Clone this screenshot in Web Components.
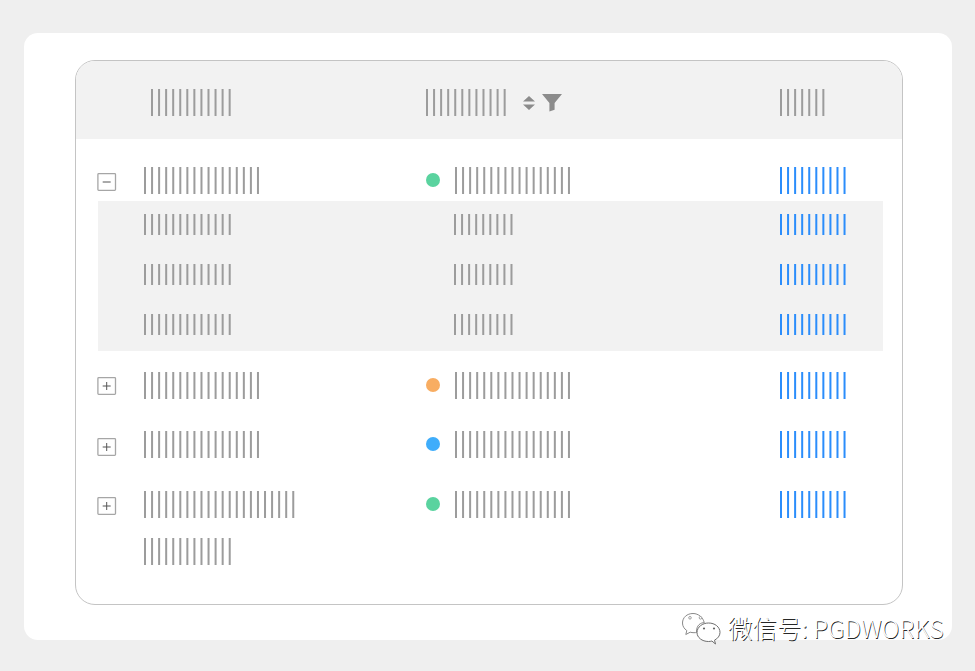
<!DOCTYPE html>
<html lang="zh">
<head>
<meta charset="utf-8">
<title>Table</title>
<style>
  html, body { margin: 0; background: #efefef; }
  body { min-height: 671px; overflow: hidden; font-family: "Liberation Sans", "Noto Sans CJK SC", sans-serif; }
</style>
</head>
<body>
<page-card>
  <tree-table>
    <table-head slot="head"></table-head>

    <table-row count="17" status="green" status-count="17" link-count="10" top="0" toggle="minus" toggle-top="6"></table-row>
    <sub-panel>
      <sub-row></sub-row>
      <sub-row></sub-row>
      <sub-row></sub-row>
    </sub-panel>
    <table-row count="17" status="orange" status-count="17" link-count="10" top="21" toggle="plus" toggle-top="5"></table-row>
    <table-row count="17" status="blue" status-count="17" link-count="10" top="32" toggle="plus" toggle-top="7"></table-row>
    <table-row count="22" extra-count="13" status="green" status-count="17" link-count="10" top="33" toggle="plus" toggle-top="6"></table-row>
  </tree-table>
  <wechat-mark slot="mark">微信号: PGDWORKS</wechat-mark>
</page-card>

<script>
// every element below renders into an open shadow root
function define(name, html) {
  const tpl = document.createElement('template');
  tpl.innerHTML = html;
  customElements.define(name, class extends HTMLElement {
    constructor() {
      super();
      this.attachShadow({ mode: 'open' }).appendChild(tpl.content.cloneNode(true));
    }
  });
}

// placeholder "text": a run of thin vertical bars
class BarText extends HTMLElement {
  constructor() {
    super();
    const count = +this.getAttribute('count') || 10;
    const h = +this.getAttribute('h') || 27;
    const color = this.getAttribute('tone') === 'link' ? '#2b8dfb' : '#9c9c9c';
    const pitch = 7.06;
    const width = (count - 1) * pitch + 2;
    let rects = '';
    for (let i = 0; i < count; i++) {
      rects += `<rect x="${(i * pitch).toFixed(2)}" width="2" height="${h}"/>`;
    }
    this.attachShadow({ mode: 'open' }).innerHTML = `
      <style>
        :host { display: block; flex: none; width: ${width}px; height: ${h}px; }
        svg { display: block; overflow: visible; }
      </style>
      <svg width="${width}" height="${h}" fill="${color}">${rects}</svg>`;
  }
}
customElements.define('bar-text', BarText);

define('page-card', `
  <style>
    :host {
      display: block;
      position: relative;
      box-sizing: border-box;
      width: 928px;
      height: 607px;
      margin: 33px 0 0 24px;
      padding: 27px 49px 35px 51px;
      background: #fff;
      border-radius: 14px;
    }
    .table-slot { display: block; }
  </style>
  <slot></slot>
  <slot name="mark"></slot>`);

define('tree-table', `
  <style>
    :host {
      display: block;
      box-sizing: border-box;
      height: 545px;
      border: 1px solid #c4c4c4;
      border-radius: 20px;
      overflow: hidden;
    }
    .body { display: flex; flex-direction: column; padding-top: 28px; }
  </style>
  <slot name="head"></slot>
  <div class="body"><slot></slot></div>`);

define('table-head', `
  <style>
    :host {
      display: grid;
      grid-template-columns: 275px 354px 1fr;
      align-items: center;
      box-sizing: border-box;
      height: 78px;
      padding: 5px 0 0 75px;
      background: #f2f2f2;
    }
    .sortable { display: flex; align-items: center; }
    .sort { margin-left: 17px; flex: none; }
    .filter { margin-left: 7px; flex: none; }
  </style>
  <bar-text count="12"></bar-text>
  <div class="sortable">
    <bar-text count="12"></bar-text>
    <svg class="sort" width="12" height="14" viewBox="0 0 12 14"><path d="M6 0 12 5.500H0Z M0 8.500H12L6 14Z" fill="#8c8c8c"/></svg>
    <svg class="filter" width="20" height="18" viewBox="0 0 20 18"><path d="M0 0H20L12.600 9V15.800L7.400 17.600V9Z" fill="#8c8c8c"/></svg>
  </div>
  <bar-text count="7"></bar-text>`);

class TableRow extends HTMLElement {
  constructor() {
    super();
    const a = n => this.getAttribute(n);
    const colors = { green: '#5ad39f', orange: '#f8ad62', blue: '#3fadfb' };
    const extra = a('extra-count') ? `<bar-text count="${a('extra-count')}" class="extra"></bar-text>` : '';
    this.attachShadow({ mode: 'open' }).innerHTML = `
      <style>
        :host {
          display: grid;
          grid-template-columns: 46px 282px 354px 1fr;
          align-items: start;
          margin-top: ${a('top')}px;
          padding-left: 22px;
        }
        tree-toggle { margin-top: ${a('toggle-top')}px; }
        .extra { margin-top: 20px; }
        .status { display: flex; align-items: flex-start; }
        .dot {
          width: 14px;
          height: 14px;
          margin: 6px 14.5px 0 0;
          border-radius: 50%;
          background: ${colors[a('status')]};
        }
      </style>
      <tree-toggle kind="${a('toggle')}"></tree-toggle>
      <div><bar-text count="${a('count')}"></bar-text>${extra}</div>
      <div class="status"><span class="dot"></span><bar-text count="${a('status-count')}"></bar-text></div>
      <bar-text count="${a('link-count')}" tone="link"></bar-text>`;
  }
}
customElements.define('table-row', TableRow);

class TreeToggle extends HTMLElement {
  constructor() {
    super();
    const plus = this.getAttribute('kind') === 'plus';
    this.attachShadow({ mode: 'open' }).innerHTML = `
      <style>
        :host { display: block; width: 18px; height: 18px; }
        svg { display: block; overflow: visible; }
      </style>
      <svg width="19" height="18" viewBox="0 0 19 18" style="margin-left:-1px">
        <rect x=".9" y=".6" width="17.600" height="16.800" rx=".8" fill="#fff" stroke="#a6a6a6" stroke-width="1.300"/>
        <path d="M5.700 9H13.700${plus ? 'M9.700 5V13' : ''}" stroke="#555" stroke-width="1" fill="none"/>
      </svg>`;
  }
}
customElements.define('tree-toggle', TreeToggle);

define('sub-panel', `
  <style>
    :host {
      display: block;
      width: 785px;
      margin: 7px 0 0 22px;
      background: #f2f2f2;
    }
  </style>
  <slot></slot>`);

define('sub-row', `
  <style>
    :host {
      display: grid;
      grid-template-columns: 46px 310px 326px 1fr;
      box-sizing: border-box;
      height: 50px;
      padding-top: 13px;
    }
  </style>
  <span></span>
  <bar-text count="13" h="21"></bar-text>
  <bar-text count="9" h="21"></bar-text>
  <bar-text count="10" h="21" tone="link"></bar-text>`);

define('wechat-mark', `
  <style>
    :host {
      position: absolute;
      left: 658px;
      top: 579px;
      display: flex;
      align-items: flex-start;
      gap: 7px;
      color: #fff;
      font: 300 24.500px/31px "Noto Sans CJK SC", "Liberation Sans", sans-serif;
      white-space: nowrap;
      text-shadow: .7px .7px .5px rgba(0, 0, 0, .85);
    }
    svg { flex: none; display: block; margin-top: 1px; }
  </style>
  <svg width="39" height="32" viewBox="0 0 39 32">
    <path d="M11 .5C5 .5.5 4.500.5 10c0 3.200 1.700 5.800 4.300 7.600L3.800 21.500 8.200 19.200c1 .3 2.500 .5 3.800 .5 1 0 1.700-.1 2.600-.2C14 12 19 9.500 22.300 9.700 21 4.500 16.500.5 11 .5Z" fill="#fff" stroke="#8a8a8a" stroke-width="1"/>
    <path d="M26.500 10C20.500 10 15 14 15 19.500c0 5 5 9 11.500 9 1.200 0 2.300-.2 3.400-.5L33.500 31l-1-3.800C35.700 25.500 38 22.800 38 19.500c0-5.500-5-9.500-11.500-9.500Z" fill="#fff" stroke="#6e6e6e" stroke-width="1"/>
    <g fill="#fff" stroke="#8a8a8a" stroke-width=".8">
      <circle cx="8" cy="4.800" r="1.300"/><circle cx="18.500" cy="4.800" r="1.300"/>
    </g>
    <g fill="#666">
      <circle cx="22" cy="15.500" r="1.100"/><circle cx="32" cy="15.500" r="1.100"/>
    </g>
  </svg>
  <span><slot></slot></span>`);
</script>
</body>
</html>
